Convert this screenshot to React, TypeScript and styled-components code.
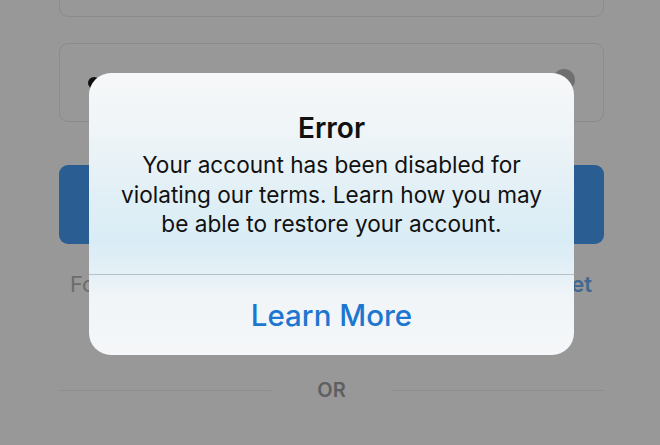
import React from "react";
import styled, { createGlobalStyle } from "styled-components";

const Global = createGlobalStyle`
  html, body { margin: 0; padding: 0; }
  body { background: #989898; font-family: "Inter", "Noto Sans", sans-serif; }
  #root { width: 660px; height: 445px; overflow: hidden; }
`;

const Page = styled.div`
  position: relative;
  width: 660px;
  height: 445px;
  background: #989898;
  overflow: hidden;
`;

const Form = styled.div`
  display: flex;
  flex-direction: column;
  padding: 0 56px 0 59px;
`;

const Field = styled.div<{ $top?: boolean }>`
  height: ${(p) => (p.$top ? "77px" : "79px")};
  margin-top: ${(p) => (p.$top ? "-60px" : "26px")};
  box-sizing: border-box;
  border: 1px solid #8b8b8b;
  border-radius: 9px;
  display: flex;
  align-items: center;
  justify-content: space-between;
  padding: 0 28px 0 28px;
`;

const Dot = styled.span`
  width: 12px;
  height: 12px;
  border-radius: 50%;
  background: #111;
`;

const ClearBtn = styled.span`
  width: 22px;
  height: 22px;
  border-radius: 50%;
  background: #6f6f6f;
  margin-top: -6px;
`;

const LoginButton = styled.div`
  margin-top: 43px;
  height: 79px;
  border-radius: 9px;
  background: #2a5e93;
`;

const LinkRow = styled.div`
  display: flex;
  justify-content: space-between;
  margin-top: 25px;
  padding: 0 12px 0 11px;
  font-size: 22px;
  line-height: 30px;
`;

const Muted = styled.span`
  color: #6c6c6c;
`;

const Accent = styled.span`
  color: #42688f;
  font-weight: 600;
`;

const Divider = styled.div`
  display: flex;
  align-items: center;
  gap: 46px;
  margin-top: 79px;
  font-size: 20px;
  font-weight: 600;
  color: #5f5f5f;
  &::before, &::after {
    content: "";
    flex: 1;
    height: 1px;
    background: #8d8d8d;
  }
`;

const Alert = styled.div`
  position: absolute;
  left: 89px;
  top: 73px;
  width: 485px;
  height: 282px;
  border-radius: 22px;
  overflow: hidden;
  display: flex;
  flex-direction: column;
  background: linear-gradient(
    180deg,
    #f7f8f9 0%,
    #eef4f7 22%,
    #e0eff6 45%,
    #d9ecf5 60%,
    #e4f0f6 71%,
    #f1f5f8 80%,
    #f5f7f9 100%
  );
`;

const AlertBody = styled.div`
  display: flex;
  flex-direction: column;
  align-items: center;
  padding: 38px 10px 0;
  height: 202px;
  box-sizing: border-box;
  border-bottom: 1px solid #b3c1c9;
  text-align: center;
  color: #111;
`;

const Title = styled.div`
  font-size: 28px;
  line-height: 34px;
  font-weight: 600;
`;

const Message = styled.div`
  margin-top: 5px;
  font-size: 22.6px;
  line-height: 29.5px;
  font-weight: 400;
`;

const Action = styled.div`
  flex: 1;
  display: flex;
  align-items: center;
  justify-content: center;
  font-size: 29.5px;
  font-weight: 500;
  color: #1d76d0;
`;

export default function App() {
  return (
    <Page>
      <Global />
      <Form>
        <Field $top />
        <Field>
          <Dot />
          <ClearBtn />
        </Field>
        <LoginButton />
        <LinkRow>
          <Muted>Forgot password?</Muted>
          <Accent>Get</Accent>
        </LinkRow>
        <Divider>OR</Divider>
      </Form>
      <Alert>
        <AlertBody>
          <Title>Error</Title>
          <Message>
            Your account has been disabled for
            <br />
            violating our terms. Learn how you may
            <br />
            be able to restore your account.
          </Message>
        </AlertBody>
        <Action>Learn More</Action>
      </Alert>
    </Page>
  );
}
